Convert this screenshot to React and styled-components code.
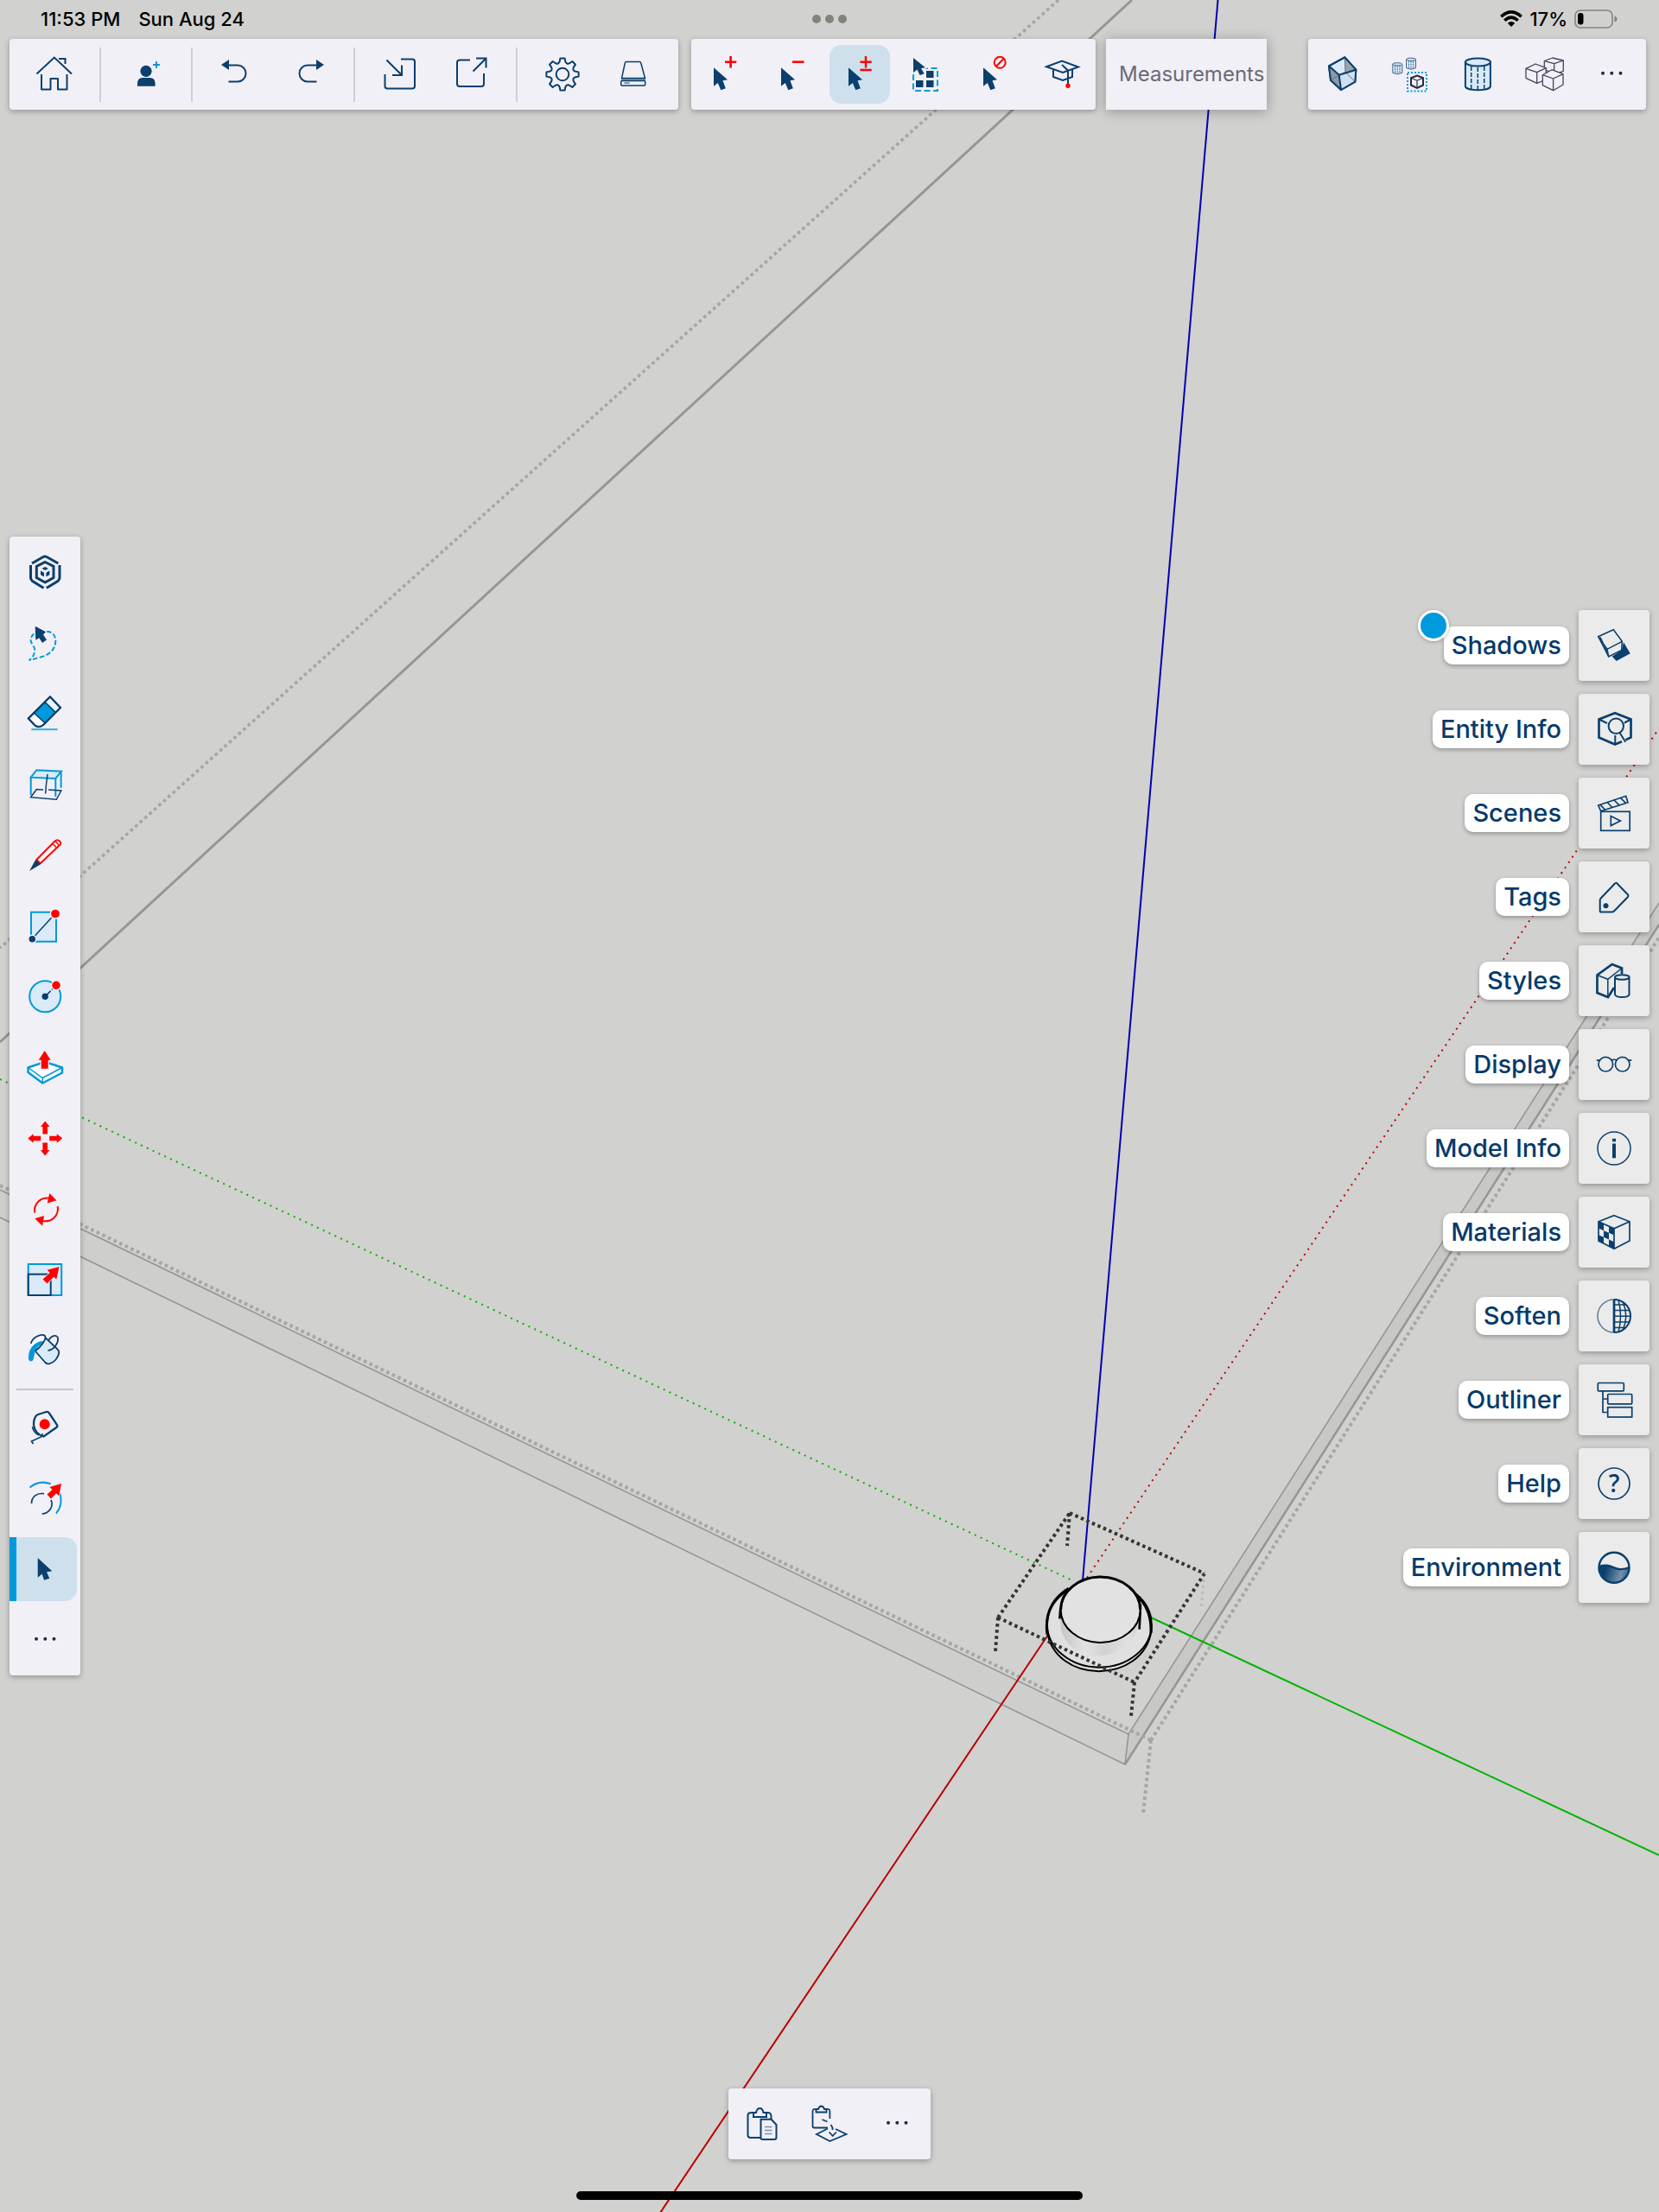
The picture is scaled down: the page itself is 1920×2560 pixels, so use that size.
import React, { useState } from "react";
import styled, { createGlobalStyle } from "styled-components";

const navy = "#0b3f6d";
const sky = "#0099dc";
const red = "#ff0000";
const tint = "#d9eaf8";
const panel = "#f1f0f6";
const ink = "#2a2740";

/* ---------- icons, all on a 48 x 48 grid ---------- */

const Icon = ({ children, color = navy, width = 2 }) => (
    <svg width="48" height="48" viewBox="0 0 48 48" fill="none" stroke={color} strokeWidth={width} aria-hidden="true">
        {children}
    </svg>
);

const Home = () => (
    <Icon>
        <path d="M3.5 23.5 23.8 4.5 44 23.5M29 6H36.5V12" />
        <path d="M9 24V41.5H19.5V29H28V41.5H38.5V24" strokeLinejoin="round" />
    </Icon>
);

const AddUser = () => (
    <Icon>
        <circle cx="24" cy="20.3" r="6.6" fill={navy} stroke="none" />
        <path d="M14 37.8V35Q14 28 20 28H28.5Q34.6 28 34.6 35V37.8Z" fill={navy} stroke="none" />
        <path d="M36 9V17M32 13H40" stroke={sky} />
    </Icon>
);

const Undo = () => (
    <Icon>
        <path d="M5 13 14 7V19Z" fill={navy} stroke="none" />
        <path d="M14 13.5H24A9.5 9.5 0 0 1 24 32.5H13.5" />
    </Icon>
);

const Redo = () => (
    <Icon>
        <path d="M42 13 33 7V19Z" fill={navy} stroke="none" />
        <path d="M33 13.5H23A9.5 9.5 0 0 0 23 32.5H33.5" />
    </Icon>
);

const Import = () => (
    <Icon>
        <path d="M25 6.5H38Q41 6.5 41 9.5V37.5Q41 40.5 38 40.5H9.5Q6.5 40.5 6.5 37.5V24" />
        <path d="M8.5 7.5 26 25M26 13.5V25H15" />
    </Icon>
);

const Export = () => (
    <Icon>
        <path d="M23 7.5H11Q8 7.5 8 10.5V35Q8 38 11 38H36Q39 38 39 35V23" />
        <path d="M26.5 20.5 41.5 5.5M30 5.5H41.5V16.5" />
    </Icon>
);

const gearPath = () => {
    const at = (deg, r) => {
        const a = (deg * Math.PI) / 180;
        return `${(24 + r * Math.sin(a)).toFixed(2)} ${(24 - r * Math.cos(a)).toFixed(2)}`;
    };
    let d = "";
    for (let i = 0; i < 8; i++) {
        const a = i * 45;
        d += `${i ? "L" : "M"}${at(a - 12, 15.5)}L${at(a - 8, 18.8)}L${at(a + 8, 18.8)}L${at(a + 12, 15.5)}Q${at(a + 22.5, 11.8)} ${at(a + 33, 15.5)}`;
    }
    return d + "Z";
};

const Gear = () => (
    <Icon>
        <path d={gearPath()} strokeLinejoin="round" />
        <circle cx="24" cy="24" r="7.3" />
    </Icon>
);

const Drive = () => (
    <Icon width={1.5}>
        <path d="M16 9.5H31Q32.5 9.5 32.8 11L37.5 28.5H10.5L14.3 11Q14.6 9.5 16 9.5Z" />
        <path d="M10 30H38" strokeWidth="1" />
        <rect x="9.7" y="31.5" width="28" height="5.5" rx="1" />
        <path d="M13.5 34H19.5" strokeWidth="1" />
    </Icon>
);

const Arrow = () => (
    <path d="M11 16.3 27 30.3 21.5 31.3 24.8 40.3 19.3 42.3 15.8 34 11 37.7Z" fill={navy} stroke="none" />
);

const SelectAdd = () => (
    <Icon>
        <Arrow />
        <path d="M30.6 3V16.5M24 9.7H37.3" stroke={red} strokeWidth="2.6" />
    </Icon>
);

const SelectRemove = () => (
    <Icon>
        <Arrow />
        <path d="M24 9.7H37.5" stroke={red} strokeWidth="2.6" />
    </Icon>
);

const SelectToggle = () => (
    <Icon>
        <Arrow />
        <path d="M31 3V16.5M24.4 9.7H37.7M24.4 19H37.7" stroke={red} strokeWidth="2.4" />
    </Icon>
);

const SelectAll = () => (
    <Icon>
        <path d="M8 24V43H36V17H20" stroke={sky} strokeDasharray="7 3.5" />
        <path d="M23 20H31.5V28H23ZM11 31H19.5V39H11ZM23 31H31.5V39H23Z" fill={navy} stroke="none" />
        <path d="M8 5 21.7 16 17 17.3 20.7 23.3 15.5 25 12.5 18.5 8 22Z" fill={navy} stroke={panel} strokeWidth="3" paintOrder="stroke" />
    </Icon>
);

const SelectNone = () => (
    <Icon>
        <Arrow />
        <circle cx="30.2" cy="10.3" r="6.5" stroke={red} />
        <path d="M25.7 15 34.7 5.7" stroke={red} />
    </Icon>
);

const Cap = () => (
    <Icon>
        <path d="M6 15.3 24 8.5 43 15.5 25 22ZM14 18.5V27L25 31 36 27V18.5M24 13 31 19.5V35" />
        <circle cx="31" cy="37.3" r="2.7" fill={red} stroke="none" />
    </Icon>
);

const GlassCube = () => (
    <Icon>
        <path d="M9 14.3 27.3 4.3 40.3 18.7 39.3 32.7 23 42 11 30.7Z" fill={tint} />
        <path d="M27.3 4.3 28 21.3 39.3 32.7 40.3 18.7Z" fill="#9aa4ae" stroke="none" />
        <path d="M9 14.3 20.7 24.7 23 42 11 30.7Z" fill="#8d99a8" stroke="none" />
        <path d="M20.7 24.7 40.3 18.7 39.3 32.7 23 42Z" fill="#cfe1f0" stroke="none" />
        <path d="M27.3 4.3 28 21.3 39.3 32.7M28 21.3 11 30.7" stroke="#66727f" strokeWidth="1" />
        <path d="M9 14.3 27.3 4.3 40.3 18.7 39.3 32.7 23 42 11 30.7ZM9 14.3 20.7 24.7 40.3 18.7M20.7 24.7 23 42" strokeLinejoin="round" />
    </Icon>
);

const SmallCylinder = ({ x, y }) => (
    <g transform={`translate(${x} ${y})`} strokeWidth="1" stroke="#3f6689">
        <path d="M.5 2V12Q6 15 11.5 12V2Z" fill={tint} />
        <ellipse cx="6" cy="2" rx="5.5" ry="1.6" fill={tint} />
        <path d="M3.3 4V13M6 4V13.5M8.7 4V13" strokeDasharray="2 1" />
    </g>
);

const Components = () => (
    <Icon>
        <SmallCylinder x={4.3} y={10.3} />
        <SmallCylinder x={20} y={4.7} />
        <rect x="22" y="22" width="22" height="21.5" stroke={sky} strokeDasharray="2 2" />
        <path d="M33 25.5 40 28.2V36.5L33 39.8 26 36.5V28.2Z" fill="#eef3fa" stroke={ink} />
        <path d="M26 28.2 33 31.2 40 28.2M33 31.2V39.8" stroke={ink} strokeWidth="1.2" />
    </Icon>
);

const Cylinder = () => (
    <Icon>
        <path d="M10.9 10V38C12 43.5 38.8 43.5 39.9 38V10Z" fill={tint} />
        <ellipse cx="25.4" cy="10" rx="14.5" ry="4.5" fill={tint} />
        <path d="M17.7 15V42M25.3 16V42M32.7 15V42" strokeWidth="1.5" strokeDasharray="5 2" />
    </Icon>
);

const Cubes = () => (
    <Icon color="#45445a" width={1.3}>
        <g fill={panel} strokeLinejoin="round">
            <path d="M24.3 8.7 33.7 5 46.3 8V20.3L35.7 24 24.3 18Z" />
            <path d="M24.3 8.7 35.7 11.7 46.3 8M35.7 11.7V22" />
            <path d="M3 17.3 14 12 26.3 16.7V30L15.7 34.3 3 28.3Z" />
            <path d="M3 17.3 15.7 21.7 26.3 16.7M15.7 21.7V34.3" />
            <path d="M22.3 24.7 33 18.7 46 23.7V36L34.6 42.7 22.3 36.7Z" />
            <path d="M22.3 24.7 34.6 29 46 23.7M34.6 29V42.7" />
        </g>
    </Icon>
);

const More = () => (
    <Icon>
        <g fill={ink} stroke="none">
            <circle cx="14" cy="22.7" r="2" />
            <circle cx="24.3" cy="22.7" r="2" />
            <circle cx="34.5" cy="22.7" r="2" />
        </g>
    </Icon>
);

const Logo = () => (
    <Icon width={3}>
        <path d="M9 14 22 6.5Q24 5.5 26 6.5L39.3 14" />
        <path d="M7.5 16V30.5Q7.5 33 9.5 34.5L22.5 42.5M41 16V30.5Q41 33 39 34.5L25.8 42.5" />
        <path d="M24.2 12.5 34 17.5V30.5L24.2 36 14.3 30.5V17.5Z" />
        <path d="M24.2 18 28 20 24.2 22 20.4 20ZM19 22.5 23 24.7V29.5L19 27.3ZM29.4 22.5 25.4 24.7V29.5L29.4 27.3Z" fill={navy} stroke="none" />
    </Icon>
);

const Lasso = () => (
    <Icon>
        <path d="M26 11C32 10.5 36 15 36.3 21C36.5 30 31 37.5 19 40.5C14 42 10 43.3 5.5 44C11 41 13.5 34 11.5 29C8.5 25 6.5 21 8 18C9 15.5 10.5 13.5 14 12.5" stroke={sky} strokeDasharray="5.5 2.5" />
        <path d="M12.7 4.7 25 11.3 22 14.5 26 20.5 21 24 17.3 18.3 13.3 20.7Z" fill={navy} stroke={panel} strokeWidth="2" paintOrder="stroke" />
    </Icon>
);

const Eraser = () => (
    <Icon>
        <path d="M30 4.5 42 17 22 37Q17 41 12.5 37.5L4.8 29.5Z" fill="#fff" />
        <path d="M30 4.5 42 17 36.3 22.5 23.9 10.5Z" fill="#eaf4fc" strokeWidth="1.5" />
        <path d="M23.9 10.5 36.3 22.5 24 34.7 11.3 23Z" fill={sky} strokeWidth="1.5" />
        <path d="M30 4.5 42 17 22 37Q17 41 12.5 37.5L4.8 29.5Z" />
        <path d="M8.3 42.2H38.7" stroke="#35aee4" />
    </Icon>
);

const SectionPlane = () => (
    <Icon>
        <path d="M7.7 15.7 14.3 7.2 43 8.7 36.3 17Z" fill={tint} stroke={sky} />
        <path d="M7.7 15.7V36M36.3 17V38M42.6 9V27.7" stroke={sky} />
        <path d="M22 30 14.3 29.5 7.5 38.7 37.3 41.3 42.8 31 28 30M27 12Q25.5 22 24.6 34.5" strokeWidth="1.5" />
    </Icon>
);

const Pencil = () => (
    <Icon>
        <path d="M14.3 29 35.5 7.5Q38.5 5 41 7.5T41 12L18.7 33.3Z" fill="#fff" stroke={red} strokeLinejoin="round" />
        <path d="M33 10.5 37.5 15M36 7.5 40.5 12.5" stroke={red} strokeWidth="1.5" />
        <path d="M6 42 13.3 28.7 19 34.3Z" fill={navy} stroke="none" />
    </Icon>
);

const Rectangle = () => (
    <Icon>
        <rect x="8" y="7.7" width="29" height="34" fill={tint} stroke={sky} />
        <path d="M9 38.7 36 9.3" strokeWidth="1.5" />
        <circle cx="9.3" cy="38.7" r="4.5" fill={navy} stroke={panel} strokeWidth="1.5" />
        <circle cx="36" cy="9.5" r="5.6" fill={red} stroke={panel} strokeWidth="1.5" />
    </Icon>
);

const Circle = () => (
    <Icon>
        <circle cx="24.2" cy="23.3" r="18" fill={tint} stroke={sky} />
        <path d="M24.2 23.3 37 10.3" strokeWidth="1.5" strokeDasharray="9 2 5 2" />
        <circle cx="24.2" cy="23.3" r="3.7" fill={navy} stroke="none" />
        <circle cx="37" cy="10.3" r="5.5" fill={red} stroke={panel} strokeWidth="1.5" />
    </Icon>
);

const PushPull = () => (
    <Icon>
        <path d="M4.5 23.5 24 17 44 23.5V29.5L21.3 41.5 4.5 29Z" fill="#fff" stroke={sky} strokeWidth="2.5" strokeLinejoin="round" />
        <path d="M4.5 23.5 21.3 35.5 44 23.5M21.3 35.5V41.5" stroke={sky} strokeWidth="1.5" />
        <path d="M23.7 4 30.7 14.7H27.7V24.7H19.7V14.7H16.7Z" fill={red} stroke={panel} strokeWidth="2.5" paintOrder="stroke" />
    </Icon>
);

const Move = () => (
    <Icon>
        {[0, 90, 180, 270].map((a) => (
            <path key={a} d="M24.2 3.5 29.5 10H27V18.5H21.4V10H19Z" fill={red} stroke="none" transform={`rotate(${a} 24.2 23.5)`} />
        ))}
    </Icon>
);

const Rotate = () => (
    <Icon color={red}>
        <path d="M12.3 27.5C10.5 18 18 9.5 28.5 10.5M38.7 20C40.5 30.5 32 39 21 37" />
        <path d="M29.3 5 37.3 13.3 26.7 16.5ZM12.3 34.3 23 31 21 42.7Z" fill={red} stroke="none" />
    </Icon>
);

const Scale = () => (
    <Icon>
        <rect x="4.7" y="5" width="38.5" height="36" fill={tint} stroke={sky} />
        <rect x="4.7" y="16.7" width="26" height="24.3" />
        <path d="M40.5 8 26.5 11.8 29.7 15 21.5 22.5 26.5 27.5 34.3 19.7 37.3 22.7Z" fill={red} stroke={panel} strokeWidth="1.5" paintOrder="stroke" />
    </Icon>
);

const Bucket = () => (
    <Icon width={1.8}>
        <path d="M12.7 23.5 24 36.5Q26.5 39 29 38.3C35 37 39.5 31 40.3 25.5Q40.3 23 38.5 21.5L24.5 8Z" fill={tint} />
        <path d="M7.7 15C9.5 8 20 2.5 24 6C26.5 10 18 20 12.7 23.5Z" fill="#fff" stroke="none" />
        <path d="M5 30C5.5 21 11 13.5 20.5 12Q23.5 12.5 21.5 15C14 19 12.5 23 11 32Q10 36 7 35.5Q4.5 34 5 30Z" fill={sky} stroke="none" />
        <path d="M7.7 15C9.5 8 20 2.5 24 6C26.5 10 18 20 12.7 23.5M27.5 23C35 22 40.5 13 38.7 7.5C35.5 4 30.5 7 28.5 11" />
    </Icon>
);

const Tape = () => (
    <Icon>
        <path d="M13.5 11Q14.5 9.5 16 9L25.5 6Q27.5 5.5 29 7.5L38 21Q39 22.8 37.3 24L22.5 34.5Q12 31 11 21Q11 14 13.5 11Z" strokeWidth="2.3" />
        <circle cx="23.7" cy="20.3" r="6" fill={red} stroke="none" />
        <path d="M9.5 23Q10.5 30 17 33M21 31 20.5 34.5 8.5 40 10.5 43" strokeWidth="1.7" />
    </Icon>
);

const Offset = () => (
    <Icon>
        <path d="M6.5 11.5Q17 2.5 30.7 7.3M41.3 18Q45.5 31 37 41.5" stroke={sky} />
        <path d="M8.5 30C8.5 22.5 14 17.5 23 18.7M31 26C34.5 33 29 41.5 20.5 42" strokeWidth="1.7" />
        <path d="M43 7 29.5 11 32.5 14 26.5 19.5 31 24.5 37 18.3 40.3 21.3Z" fill={red} stroke={panel} strokeWidth="1.5" paintOrder="stroke" />
    </Icon>
);

const Pointer = () => (
    <Icon>
        <path d="M15.7 11 32.3 26.3 26 27.3 29.3 34.7 23 36.7 20.7 29.5 15.7 33.8Z" fill={navy} stroke="none" />
    </Icon>
);

const ShadowsIcon = () => (
    <Icon width={1.5}>
        <path d="M21.7 36.7 32.7 29.3 35 20.3 42.7 33.3 26.7 42Z" fill={navy} stroke="none" />
        <path d="M5.7 13.7 23.3 5.7 33.3 19.3 32.7 29.3 17.7 37Z" fill="#ebebeb" />
        <path d="M5.7 13.7 16 28.3 33.3 19.3M16 28.3 17.7 37M8 14.5 16.5 32" />
    </Icon>
);

const EntityIcon = () => (
    <Icon>
        <path d="M37.5 36.3 43.5 33.5V12.5L25 5.2 6.5 12.5V33.5L25 41.5 33 38.3" strokeWidth="2.7" />
        <path d="M6.5 12.5 16 17M43.5 12.5 36 16.5M25.3 31V41.5" />
        <circle cx="26.3" cy="20.3" r="8.7" />
        <path d="M30.5 28 37.3 38.7" />
    </Icon>
);

const ScenesIcon = () => (
    <Icon width={1.7}>
        <rect x="8.7" y="22.3" width="33.5" height="22" />
        <path d="M20.3 27.5 31.3 33 20.3 38.5ZM5.7 15 37.7 4.3 40 11.7 8.7 21.8Z" />
        <path d="M8 14.3 13.5 20M16 11.5 22 17.5M24 9 30 14.8M31.5 6.5 37.5 12.3" />
    </Icon>
);

const TagIcon = () => (
    <Icon>
        <path d="M24.5 9Q26 7 27.5 8.5L40 21.5Q41 22.6 40 24L24.5 40Q23 41.6 21 41.6H9Q7.7 41.6 7.7 40V28Q7.7 26.5 8.7 25.5Z" />
        <circle cx="14.5" cy="34.2" r="3" fill={navy} stroke="none" />
    </Icon>
);

const StylesIcon = () => (
    <Icon>
        <path d="M24 32 17 43 4.5 38V17.5L21.7 5 33 9.5V16" strokeWidth="2.7" />
        <path d="M4.5 17.5 16.8 22.3 33 9.5M16.8 22.3V43" strokeWidth="1.5" />
        <path d="M25 20.5V40Q26 43 33.3 43T41.5 40V20.5" />
        <ellipse cx="33.3" cy="20" rx="8.3" ry="2.7" />
    </Icon>
);

const GlassesIcon = () => (
    <Icon width={1.7}>
        <circle cx="14.3" cy="23.7" r="8.3" />
        <circle cx="33.7" cy="23.7" r="8.3" />
        <path d="M3.7 19.2H7.5M40.5 19.2H44.3M20.5 19Q24 17.5 27.5 19" />
    </Icon>
);

const InfoIcon = () => (
    <Icon width={1.5}>
        <circle cx="24" cy="24" r="19" />
        <path d="M24 12.8V16.3M24 18.5V35.3" strokeWidth="4" />
    </Icon>
);

const MaterialsIcon = () => (
    <Icon width={1.7}>
        <g transform="matrix(6 2.67 0 7.7 6 11.8)" fill={navy} stroke="none">
            <path d="M0 0H1V1H0ZM2 0H3V1H2ZM1 1H2V2H1ZM0 2H1V3H0ZM2 2H3V3H2Z" />
        </g>
        <path d="M24 4.7 42 11.8V34L24 43.3 6 34V11.8ZM6 11.8 24 19.8 42 11.8M24 19.8V43.3" />
    </Icon>
);

const SoftenIcon = () => (
    <Icon width={1.5}>
        <path d="M24 5A19 19 0 0 0 24 43" stroke="#5d7d9b" />
        <path d="M24 5A19 19 0 0 1 24 43" strokeWidth="2" />
        <path d="M24 5V43" strokeWidth="2.7" />
        <path d="M24 11H37M24 17.5H41.5M24 24.3H43M24 31H41.5M24 37.5H37M29 5.7Q34 24 29 42.5M34.5 8.5Q41 24 34.5 39.5" />
    </Icon>
);

const OutlinerIcon = () => (
    <Icon width={1.7}>
        <rect x="5.3" y="4.5" width="30" height="9.3" rx="1" />
        <rect x="16.7" y="17.5" width="28" height="11.3" rx="1" />
        <rect x="16.7" y="32.7" width="28" height="11.3" />
        <path d="M11 14V38.5H16.5M11 23H16.5" />
    </Icon>
);

const HelpIcon = () => (
    <Icon width={1.7}>
        <circle cx="24" cy="24" r="18" />
        <text x="24" y="34" textAnchor="middle" fontFamily="Open Sans, sans-serif" fontSize="28" fontWeight="600" fill={navy} stroke="none">?</text>
    </Icon>
);

const EnvironmentIcon = () => (
    <Icon width={2.4}>
        <defs>
            <linearGradient id="water" x1="0" y1="0.3" x2="1" y2="0.5">
                <stop offset="0.2" stopColor={navy} />
                <stop offset="0.75" stopColor="#7690aa" />
                <stop offset="1" stopColor="#2f5a82" />
            </linearGradient>
        </defs>
        <path d="M6.5 23C17 19 23 25 30 26Q36 26.5 41.5 24A17.5 17.5 0 0 1 6.5 24Z" fill="url(#water)" stroke="none" />
        <path d="M6.5 23C17 19 23 25 30 26Q36 26.5 41.5 24" />
        <circle cx="24" cy="24.3" r="17.5" />
    </Icon>
);

const PasteIcon = () => (
    <Icon>
        <path d="M13.5 11Q7.5 10.5 7.5 14V37Q7.5 40 10.5 40H22M29.5 11Q34.5 10.5 34.5 15V19" />
        <path d="M14 11H17Q18 6 21.3 6T25.5 11H29V16H14Z" />
        <path d="M22.5 18.7H34.5L40.5 25V39.5Q40.5 42 38 42H24.5Q22.5 42 22.5 40Z" fill={panel} />
        <path d="M27 27.5H35.5M27 31.5H35.5M27 35.5H35.5" stroke="#7792ae" strokeWidth="1.5" />
    </Icon>
);

const PasteInPlaceIcon = () => (
    <Icon width={1.8}>
        <path d="M8 7Q4.5 6.5 4.5 9.5V26.5Q4.5 28.5 6.5 28.5H22M21 7Q24.4 6.5 24.4 9.5V18" />
        <path d="M8.5 7H11Q12 3.5 14.5 3.5T18 7H20.5V10.5H8.5Z" />
        <path d="M22 29.5 9 36 24.4 44 43.5 36 31 30M15.5 19 21.5 21.5M25.5 25Q28 28 27.7 31" />
        <path d="M23.6 33.5 27.7 38 31.8 33.5" />
    </Icon>
);

/* ---------- the model behind the toolbars ---------- */

const Model = () => (
    <Canvas viewBox="0 0 1920 2560" preserveAspectRatio="xMidYMid slice" aria-hidden="true">
        <defs>
            <linearGradient id="rim">
                <stop offset="0" stopColor="#c4c4c4" />
                <stop offset="0.3" stopColor="#e2e2e2" />
                <stop offset="0.55" stopColor="#d2d2d2" />
                <stop offset="0.85" stopColor="#e0e0e0" />
                <stop offset="1" stopColor="#cccccc" />
            </linearGradient>
        </defs>
        <path d="M1306 2007 1920 1045V1070L1302 2042Z" fill="#c8c8c6" />
        <path d="M0 1377 1306 2007 1302 2042 0 1409Z" fill="#cececc" />
        <g fill="none" stroke="#969694">
            <path d="M1310 0 0 1206" strokeWidth="3" />
            <path d="M0 1377 1306 2007 1920 1045M0 1409 1302 2042 1306 2007" strokeWidth="1.6" />
            <path d="M1302 2042 1920 1070" strokeWidth="2.6" />
        </g>
        <g fill="none" stroke="#a6a6a4" strokeWidth="4" strokeDasharray="3.7 3.6">
            <path d="M1225 0 0 1097" strokeWidth="3.6" />
            <path d="M0 1372 1332 2014M1332 2014 1920 1085M1332 2014 1323 2099" />
        </g>
        <path d="M1394 1821 1390 1862" stroke="#bcbcba" strokeWidth="3" strokeDasharray="3 4" />
        <path d="M0 1249 1243 1830" stroke="#00b400" strokeWidth="2" strokeDasharray="2 5.5" />
        <path d="M1258 1826 1920 843" stroke="#c00000" strokeWidth="2" strokeDasharray="2 5.5" />
        <path d="M1330 1871 1920 2147" stroke="#00b400" strokeWidth="2" />
        <path d="M1409.5 0 1253 1829" stroke="#0000b4" strokeWidth="2" />
        <path d="M1213 1892 764 2561" stroke="#b80000" strokeWidth="2" />
        <g transform="translate(1120 1720) scale(.3333)" fill="none" stroke="#000" strokeWidth="6">
            <path d="M275 480V500C300 690 610 690 638 500V480Z" fill="#dcdcda" />
            <ellipse cx="457" cy="480" rx="181" ry="149" fill="#e0e0e0" />
            <path d="M322 428V480C335 625 570 625 590 480L600 428Z" fill="url(#rim)" stroke="none" />
            <path d="M322 425 319 460M600 410 596 497" strokeWidth="8" />
            <ellipse cx="461" cy="429" rx="138" ry="114" fill="#e2e2e2" />
            <path d="M323 429A138 114 0 0 1 599 429M276 515Q262 410 350 355M582 375Q640 425 636 510" strokeWidth="9" />
        </g>
        <path d="M1238 1751 1394 1821M1394 1821 1313 1947M1155 1872 1313 1947M1155 1872 1238 1751M1238 1751 1235 1789M1155 1872 1152 1911M1313 1947 1309 1986" stroke="#343434" strokeWidth="4" strokeDasharray="3.5 3.6" />
    </Canvas>
);

/* ---------- page ---------- */

const fileGroups = [
    [["Home", Home]],
    [["Invite", AddUser]],
    [["Undo", Undo], ["Redo", Redo]],
    [["Import", Import], ["Export", Export]],
    [["Settings", Gear], ["Storage", Drive]]
];

const selectTools = [
    ["Add to selection", SelectAdd],
    ["Remove from selection", SelectRemove],
    ["Toggle selection", SelectToggle],
    ["Select all", SelectAll],
    ["Select none", SelectNone],
    ["Learn", Cap]
];

const viewTools = [
    ["X-ray", GlassCube],
    ["Components", Components],
    ["Hidden geometry", Cylinder],
    ["Hidden objects", Cubes],
    ["More views", More]
];

const drawTools = [
    ["Search", Logo], ["Lasso", Lasso], ["Eraser", Eraser], ["Section plane", SectionPlane],
    ["Line", Pencil], ["Rectangle", Rectangle], ["Circle", Circle], ["Push/Pull", PushPull],
    ["Move", Move], ["Rotate", Rotate], ["Scale", Scale], ["Paint", Bucket]
];

const otherTools = [["Tape measure", Tape], ["Offset", Offset], ["Select", Pointer], ["More tools", More]];

const panels = [
    ["Shadows", ShadowsIcon], ["Entity Info", EntityIcon], ["Scenes", ScenesIcon], ["Tags", TagIcon],
    ["Styles", StylesIcon], ["Display", GlassesIcon], ["Model Info", InfoIcon], ["Materials", MaterialsIcon],
    ["Soften", SoftenIcon], ["Outliner", OutlinerIcon], ["Help", HelpIcon], ["Environment", EnvironmentIcon]
];

export default () => {
    const [mode, setMode] = useState("Toggle selection");
    const [tool, setTool] = useState("Select");
    const [length, setLength] = useState("");

    const sideTool = ([name, Glyph]) => (
        <SideButton key={name} aria-label={name} $active={tool === name} onClick={() => setTool(name)}>
            <Glyph />
        </SideButton>
    );

    return (
        <Page>
            <GlobalStyle />
            <Model />
            <Header>
                <StatusBar>
                    <Clock><span>11:53 PM</span><span>Sun Aug 24</span></Clock>
                    <Multitask><i /><i /><i /></Multitask>
                    <Power>
                        <svg width="26" height="19" viewBox="0 0 26 19" fill="none" stroke="#000" strokeWidth="3.6" aria-hidden="true">
                            <path d="M1.3 7.3Q13-3.5 24.7 7.3M5.3 11.8Q13 4.5 20.7 11.8" />
                            <path d="M13 19 8.8 14.8Q13 11 17.2 14.8Z" fill="#000" stroke="none" />
                        </svg>
                        <span>17%</span>
                        <svg width="50" height="22" viewBox="0 0 50 22" aria-hidden="true">
                            <rect x="1" y="1" width="43" height="20" rx="6" fill="none" stroke="#83837f" strokeWidth="1.6" />
                            <rect x="4" y="4" width="6.5" height="13.5" rx="3" />
                            <path d="M46.5 7.5Q49.5 8.5 49.5 11T46.5 14.5Z" fill="#83837f" />
                        </svg>
                    </Power>
                </StatusBar>
                <TopBars>
                    <Bar>
                        {fileGroups.map((group, i) => (
                            <Group key={i}>
                                {group.map(([name, Glyph]) => (
                                    <FileButton key={name} aria-label={name}><Glyph /></FileButton>
                                ))}
                            </Group>
                        ))}
                    </Bar>
                    <SelectBar>
                        {selectTools.map(([name, Glyph]) => (
                            <BarButton key={name} aria-label={name} $active={mode === name} onClick={() => setMode(name)}>
                                <Glyph />
                            </BarButton>
                        ))}
                    </SelectBar>
                    <Measurements
                        aria-label="Measurements"
                        placeholder="Measurements"
                        value={length}
                        onChange={(e) => setLength(e.target.value)}
                    />
                    <ViewBar>
                        {viewTools.map(([name, Glyph]) => (
                            <BarButton key={name} aria-label={name}><Glyph /></BarButton>
                        ))}
                    </ViewBar>
                </TopBars>
            </Header>
            <Middle>
                <SideBar>
                    {drawTools.map(sideTool)}
                    <Rule />
                    {otherTools.map(sideTool)}
                </SideBar>
                <PanelList>
                    {panels.map(([name, Glyph], i) => (
                        <PanelRow key={name}>
                            <PanelLabel htmlFor={`panel-${i}`}>
                                {name}
                                {name === "Shadows" && <Badge />}
                            </PanelLabel>
                            <PanelButton id={`panel-${i}`}><Glyph /></PanelButton>
                        </PanelRow>
                    ))}
                </PanelList>
            </Middle>
            <Footer>
                <Bar>
                    <BarButton aria-label="Paste"><PasteIcon /></BarButton>
                    <BarButton aria-label="Paste in place"><PasteInPlaceIcon /></BarButton>
                    <BarButton aria-label="More actions"><More /></BarButton>
                </Bar>
                <HomeIndicator />
            </Footer>
        </Page>
    );
};

const GlobalStyle = createGlobalStyle`
    body {
        margin: 0;
        background: #d1d1cf;
        font-family: Inter, "Liberation Sans", sans-serif;
    }

    * {
        box-sizing: border-box;
    }

    button {
        border: 0;
        padding: 0;
        background: none;
        cursor: pointer;
        display: flex;
        align-items: center;
        justify-content: center;
    }
`;

const Page = styled.main`
    position: relative;
    min-height: 100vh;
    display: grid;
    grid-template-rows: 1fr auto 1fr;
    overflow: hidden;
`;

const Canvas = styled.svg`
    position: absolute;
    inset: 0;
    width: 100%;
    height: 100%;
`;

const Header = styled.header`
    position: relative;
`;

const StatusBar = styled.div`
    display: grid;
    grid-template-columns: 1fr auto 1fr;
    align-items: center;
    height: 45px;
    padding: 0 48px 2px 47px;
    font-size: 22px;
    font-weight: 500;
    color: #000;
`;

const Clock = styled.div`
    display: flex;
    gap: 21px;
`;

const Multitask = styled.div`
    display: flex;
    gap: 5px;

    i {
        width: 10px;
        height: 10px;
        border-radius: 50%;
        background: #83837c;
    }
`;

const Power = styled.div`
    display: flex;
    align-items: center;
    justify-content: flex-end;
    gap: 8px;
`;

const TopBars = styled.div`
    display: flex;
    padding: 0 15px 0 11px;
`;

const Bar = styled.div`
    display: flex;
    align-items: center;
    height: 82px;
    border-radius: 4px;
    background: ${panel};
    box-shadow: 0 2px 6px rgba(0, 0, 0, 0.3);
`;

const SelectBar = styled(Bar)`
    margin: 0 12px 0 15px;
`;

const ViewBar = styled(Bar)`
    margin-left: auto;
    padding-right: 1px;
`;

const Group = styled.div`
    display: flex;
    height: 63px;
    padding: 0 11px;

    & + & {
        border-left: 2px solid #cfced5;
    }
`;

const FileButton = styled.button`
    width: 82px;
`;

const BarButton = styled.button`
    width: 70px;
    height: 68px;
    margin: 0 4px;
    border-radius: 14px;

    && {
        background: ${(p) => (p.$active ? "#cee0ec" : "none")};
    }
`;

const Measurements = styled.input`
    width: 186px;
    height: 82px;
    padding: 0 0 2px 15px;
    border: 0;
    outline: 0;
    background: ${panel};
    box-shadow: 0 2px 14px rgba(0, 0, 0, 0.3);
    font: 400 24px Inter, "Liberation Sans", sans-serif;

    &::placeholder {
        color: #6c6a78;
        opacity: 1;
    }
`;

const Middle = styled.div`
    position: relative;
    display: flex;
    align-items: center;
    justify-content: space-between;
    padding: 0 11px;
`;

const SideBar = styled.nav`
    display: flex;
    flex-direction: column;
    width: 82px;
    border-radius: 4px;
    background: ${panel};
    box-shadow: 0 2px 6px rgba(0, 0, 0, 0.3);
`;

const SideButton = styled.button`
    width: 78px;
    height: 74px;
    margin: 4px 0;

    && {
        padding-left: ${(p) => (p.$active ? "0" : "4px")};
        border-left: ${(p) => (p.$active ? `8px solid ${sky}` : "0")};
        border-radius: 0 14px 14px 0;
        background: ${(p) => (p.$active ? "#cee0ec" : "none")};
    }

    svg {
        margin-left: ${(p) => (p.$active ? "-4px" : "0")};
    }
`;

const Rule = styled.hr`
    width: 66px;
    height: 2px;
    margin: 2px 8px;
    border: 0;
    background: #c6c5cd;
`;

const PanelList = styled.div`
    display: flex;
    flex-direction: column;
    gap: 15px;
`;

const PanelRow = styled.div`
    display: flex;
    align-items: center;
    justify-content: flex-end;
    gap: 11px;
`;

const PanelLabel = styled.label`
    position: relative;
    height: 44px;
    padding: 0 9px;
    border-radius: 10px;
    background: #fff;
    box-shadow: 0 2px 5px rgba(0, 0, 0, 0.3);
    color: #063a6a;
    font-size: 29px;
    font-weight: 500;
    line-height: 44px;
`;

const Badge = styled.span`
    position: absolute;
    top: -19px;
    left: -30px;
    width: 36px;
    height: 36px;
    border: 3px solid #fff;
    border-radius: 50%;
    background: ${sky};
    box-shadow: 0 1px 4px rgba(0, 0, 0, 0.25);
`;

const PanelButton = styled.button`
    width: 82px;
    height: 82px;
    border-radius: 4px;
    box-shadow: 0 2px 6px rgba(0, 0, 0, 0.3);

    && {
        background: #ebebeb;
    }
`;

const Footer = styled.footer`
    position: relative;
    align-self: end;
    display: flex;
    flex-direction: column;
    align-items: center;
    gap: 37px;
    padding-bottom: 14px;
`;

const HomeIndicator = styled.div`
    width: 586px;
    max-width: 80%;
    height: 10px;
    border-radius: 5px;
    background: #000;
`;
